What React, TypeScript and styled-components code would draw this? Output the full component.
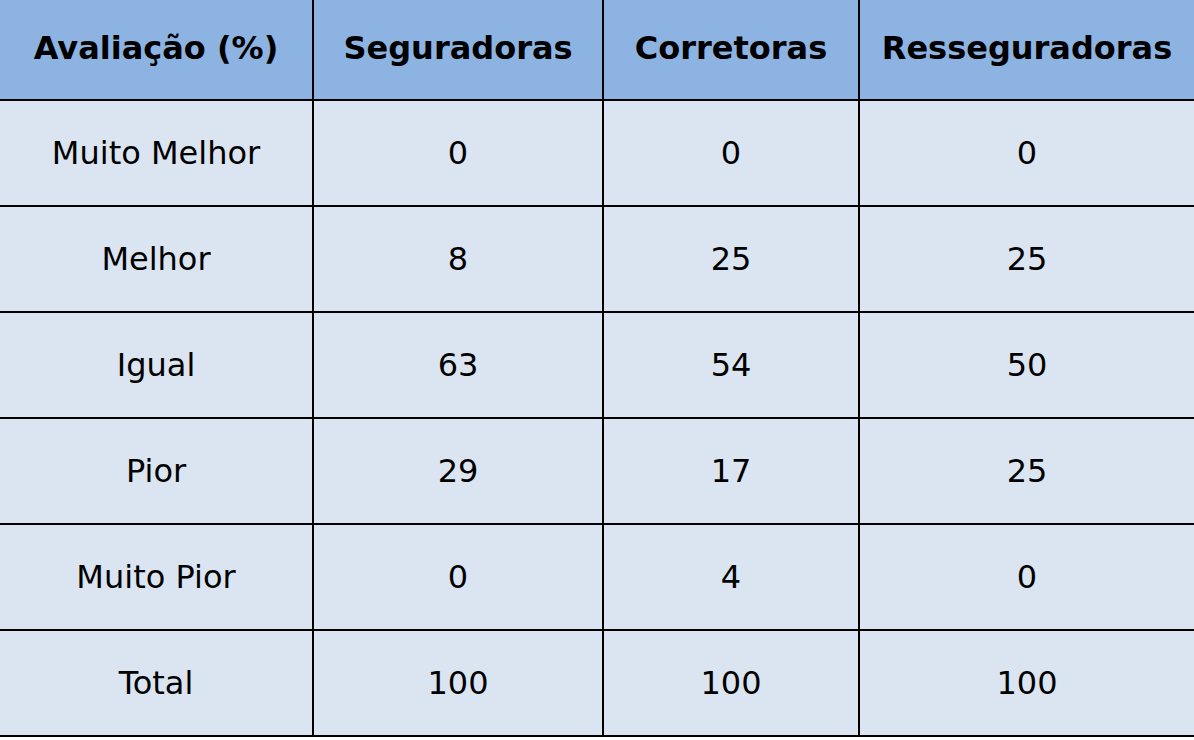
import React from "react";
import styled, { createGlobalStyle } from "styled-components";

const Global = createGlobalStyle`
  html, body { margin: 0; padding: 0; background: #ffffff; }
  body { font-family: Verdana, "DejaVu Sans", sans-serif; }
`;

const Grid = styled.div`
  display: grid;
  grid-template-columns: 312px 288px 254px 1fr;
  grid-auto-rows: 104px;
  grid-template-rows: 99px;
  gap: 2px;
  background: #000;
  padding-bottom: 2px;
  width: 1194px;
`;

const Cell = styled.div<{ $head?: boolean }>`
  display: flex;
  align-items: center;
  justify-content: center;
  box-sizing: border-box;
  padding-bottom: ${(p) => (p.$head ? "4px" : "0")};
  background: ${(p) => (p.$head ? "#8db3e2" : "#dbe5f1")};
  color: #000;
  font-family: Verdana, "DejaVu Sans", sans-serif;
  font-size: 32px;
  font-weight: ${(p) => (p.$head ? 700 : 400)};
  white-space: nowrap;
`;

const head = ["Avaliação (%)", "Seguradoras", "Corretoras", "Resseguradoras"];
const rows: string[][] = [
  ["Muito Melhor", "0", "0", "0"],
  ["Melhor", "8", "25", "25"],
  ["Igual", "63", "54", "50"],
  ["Pior", "29", "17", "25"],
  ["Muito Pior", "0", "4", "0"],
  ["Total", "100", "100", "100"],
];

export default function App() {
  return (
    <>
      <Global />
      <Grid>
        {head.map((h) => (
          <Cell key={h} $head>
            {h}
          </Cell>
        ))}
        {rows.map((r, i) =>
          r.map((c, j) => <Cell key={`${i}-${j}`}>{c}</Cell>)
        )}
      </Grid>
    </>
  );
}
